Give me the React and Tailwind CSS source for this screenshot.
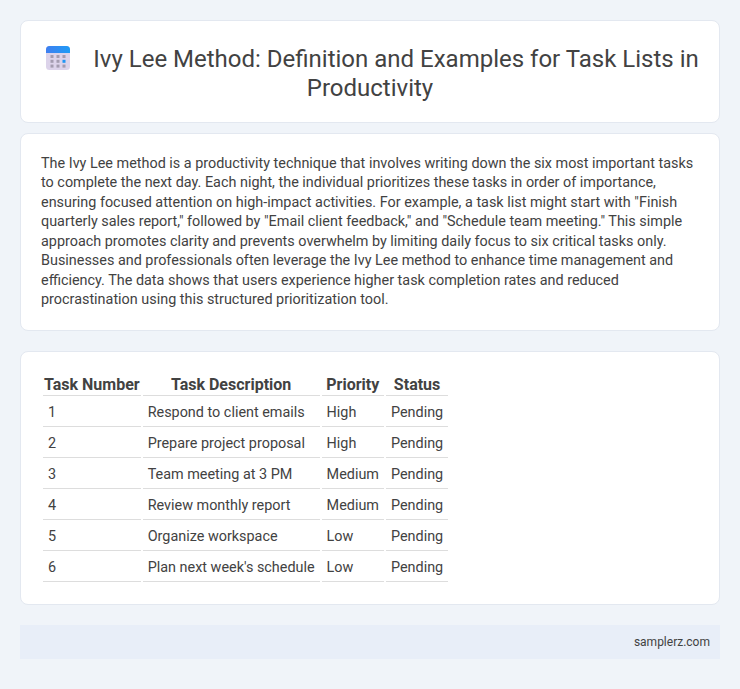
const rows = [
  ["1", "Respond to client emails", "High", "Pending"],
  ["2", "Prepare project proposal", "High", "Pending"],
  ["3", "Team meeting at 3 PM", "Medium", "Pending"],
  ["4", "Review monthly report", "Medium", "Pending"],
  ["5", "Organize workspace", "Low", "Pending"],
  ["6", "Plan next week's schedule", "Low", "Pending"],
];
const headers = ["Task Number", "Task Description", "Priority", "Status"];

function CalendarIcon() {
  const cells = [];
  for (let r = 0; r < 3; r++) for (let c = 0; c < 3; c++) cells.push([r, c]);
  return (
    <svg width="24" height="24" viewBox="0 0 24 24" className="inline-block align-middle ml-[5px] mr-[23px] -mt-[6px]">
      <defs>
        <linearGradient id="b" x1="0" y1="0" x2="1" y2="0">
          <stop offset="0" stopColor="#3f7ff0" />
          <stop offset="1" stopColor="#1f9bf5" />
        </linearGradient>
      </defs>
      <rect x="0" y="0" width="24" height="24" rx="3.5" fill="#dcd3ea" />
      <path d="M0 7V3.5A3.5 3.5 0 0 1 3.5 0h17A3.5 3.5 0 0 1 24 3.5V7z" fill="url(#b)" />
      {cells.map(([r, c]) => (
        <rect key={`${r}${c}`} x={4.5 + c * 6} y={9 + r * 4.8} width="3" height="3"
          fill={r === 1 && c === 2 ? "#2196f3" : "#a49cb0"} />
      ))}
    </svg>
  );
}

export default function App() {
  return (
    <div className="min-h-[689px] bg-[#f0f4f9] p-5 text-[#424242] font-['Roboto',sans-serif]">
      <header className="rounded-[8px] border border-[#e3e8f0] bg-white px-5 pt-[24px] pb-[19px]">
        <h1 className="text-center text-[24px] leading-[29px] font-normal">
          <CalendarIcon />
          Ivy Lee Method: Definition and Examples for Task Lists in Productivity
        </h1>
      </header>
      <section className="mt-[10px] rounded-[8px] border border-[#e3e8f0] bg-white px-5 py-5">
        <p className="text-[14.4px] leading-[19.44px]">
          The Ivy Lee method is a productivity technique that involves writing down the six most important tasks to complete the next day. Each night, the individual prioritizes these tasks in order of importance, ensuring focused attention on high-impact activities. For example, a task list might start with "Finish quarterly sales report," followed by "Email client feedback," and "Schedule team meeting." This simple approach promotes clarity and prevents overwhelm by limiting daily focus to six critical tasks only. Businesses and professionals often leverage the Ivy Lee method to enhance time management and efficiency. The data shows that users experience higher task completion rates and reduced procrastination using this structured prioritization tool.
        </p>
      </section>
      <section className="mt-5 rounded-[8px] border border-[#e3e8f0] bg-white px-5 py-5">
        <table className="border-separate border-spacing-[2px] text-[14.4px]">
          <thead>
            <tr>
              {headers.map((h) => (
                <th key={h} className="border-b-[1px] border-[#dddddd] px-[1px] pt-[1px] pb-[1px] text-center text-[16px] leading-[19px] font-bold whitespace-nowrap">{h}</th>
              ))}
            </tr>
          </thead>
          <tbody>
            {rows.map((r) => (
              <tr key={r[0]}>
                {r.map((c, i) => (
                  <td key={i} className="border-b-[1px] border-[#dddddd] px-[5px] pt-[6px] pb-[4px] leading-[18px] whitespace-nowrap">{c}</td>
                ))}
              </tr>
            ))}
          </tbody>
        </table>
      </section>
      <footer className="mt-5 h-[34px] bg-[#e8eef8] px-[10px] flex items-center justify-end text-[12px]">
        samplerz.com
      </footer>
    </div>
  );
}
